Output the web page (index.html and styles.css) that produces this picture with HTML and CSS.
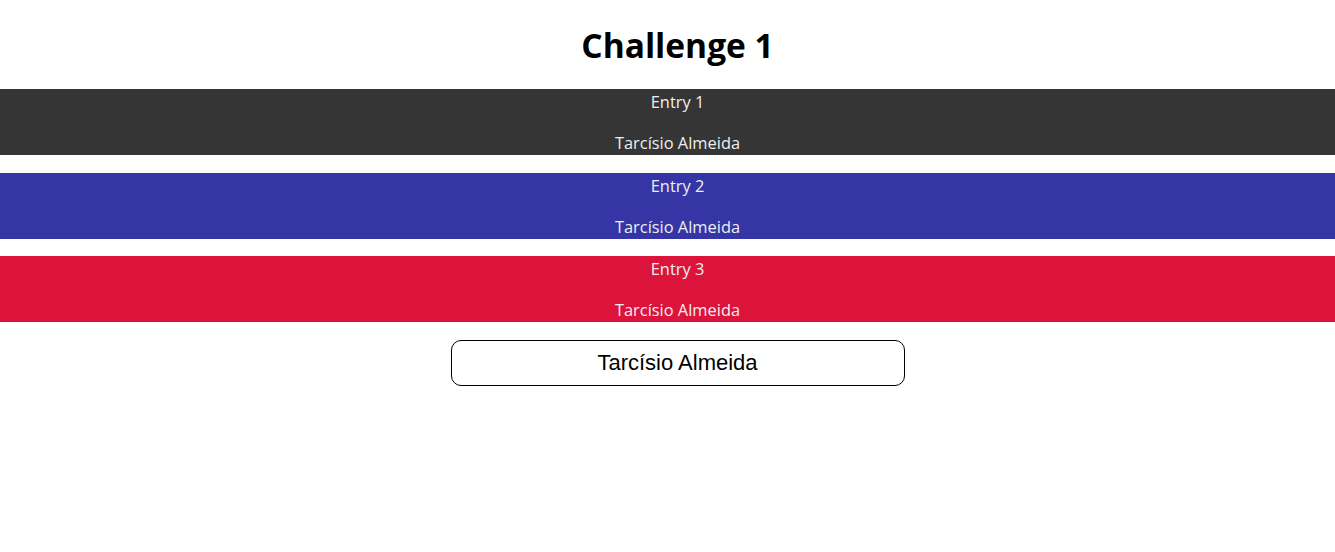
FILE: index.html
```html
<!DOCTYPE html>
<html lang="pt">
<head>
<meta charset="utf-8">
<title>Challenge 1</title>
<link rel="stylesheet" href="styles.css">
</head>
<body>
<h1 class="title">Challenge 1</h1>
<div class="entries">
  <div class="entry entry-dark">
    <p class="entry-line">Entry 1</p>
    <p class="entry-line">Tarcísio Almeida</p>
  </div>
  <div class="entry entry-blue">
    <p class="entry-line">Entry 2</p>
    <p class="entry-line">Tarcísio Almeida</p>
  </div>
  <div class="entry entry-red">
    <p class="entry-line">Entry 3</p>
    <p class="entry-line">Tarcísio Almeida</p>
  </div>
</div>
<div class="field-wrap">
  <input class="name-field" type="text" value="Tarcísio Almeida" autofocus>
</div>
</body>
</html>
```

FILE: styles.css
```css
html, body {
  margin: 0;
  padding: 0;
  background: #ffffff;
}

body {
  font-family: "Open Sans", "Noto Sans", "DejaVu Sans", sans-serif;
}

.title {
  margin: 0;
  height: 89px;
  padding: 24px 0 0 20px;
  box-sizing: border-box;
  text-align: center;
  font-size: 33.5px;
  line-height: 42px;
  font-weight: 700;
  color: #000;
}

.entries {
  display: flex;
  flex-direction: column;
  gap: 17.6px;
}

.entry {
  height: 66px;
  box-sizing: border-box;
  padding: 2px 0 2px 20px;
  display: flex;
  flex-direction: column;
  justify-content: space-between;
  align-items: center;
  color: #eeeeee;
  font-size: 16.4px;
}

.entry-line {
  margin: 0;
  line-height: 21px;
}

.entry-dark { background: #353535; }
.entry-blue { background: #3535a6; }
.entry-red { background: #dc143c; }

.field-wrap {
  display: flex;
  justify-content: center;
  padding: 17.6px 0 0 20px;
}

.name-field {
  width: 454px;
  height: 46px;
  box-sizing: border-box;
  border: 1px solid #000;
  border-radius: 10px;
  text-align: center;
  font-family: "Liberation Sans", Arial, sans-serif;
  font-size: 22px;
  color: #000;
  outline: none;
  padding: 0 8px;
  background: #fff;
}
```
